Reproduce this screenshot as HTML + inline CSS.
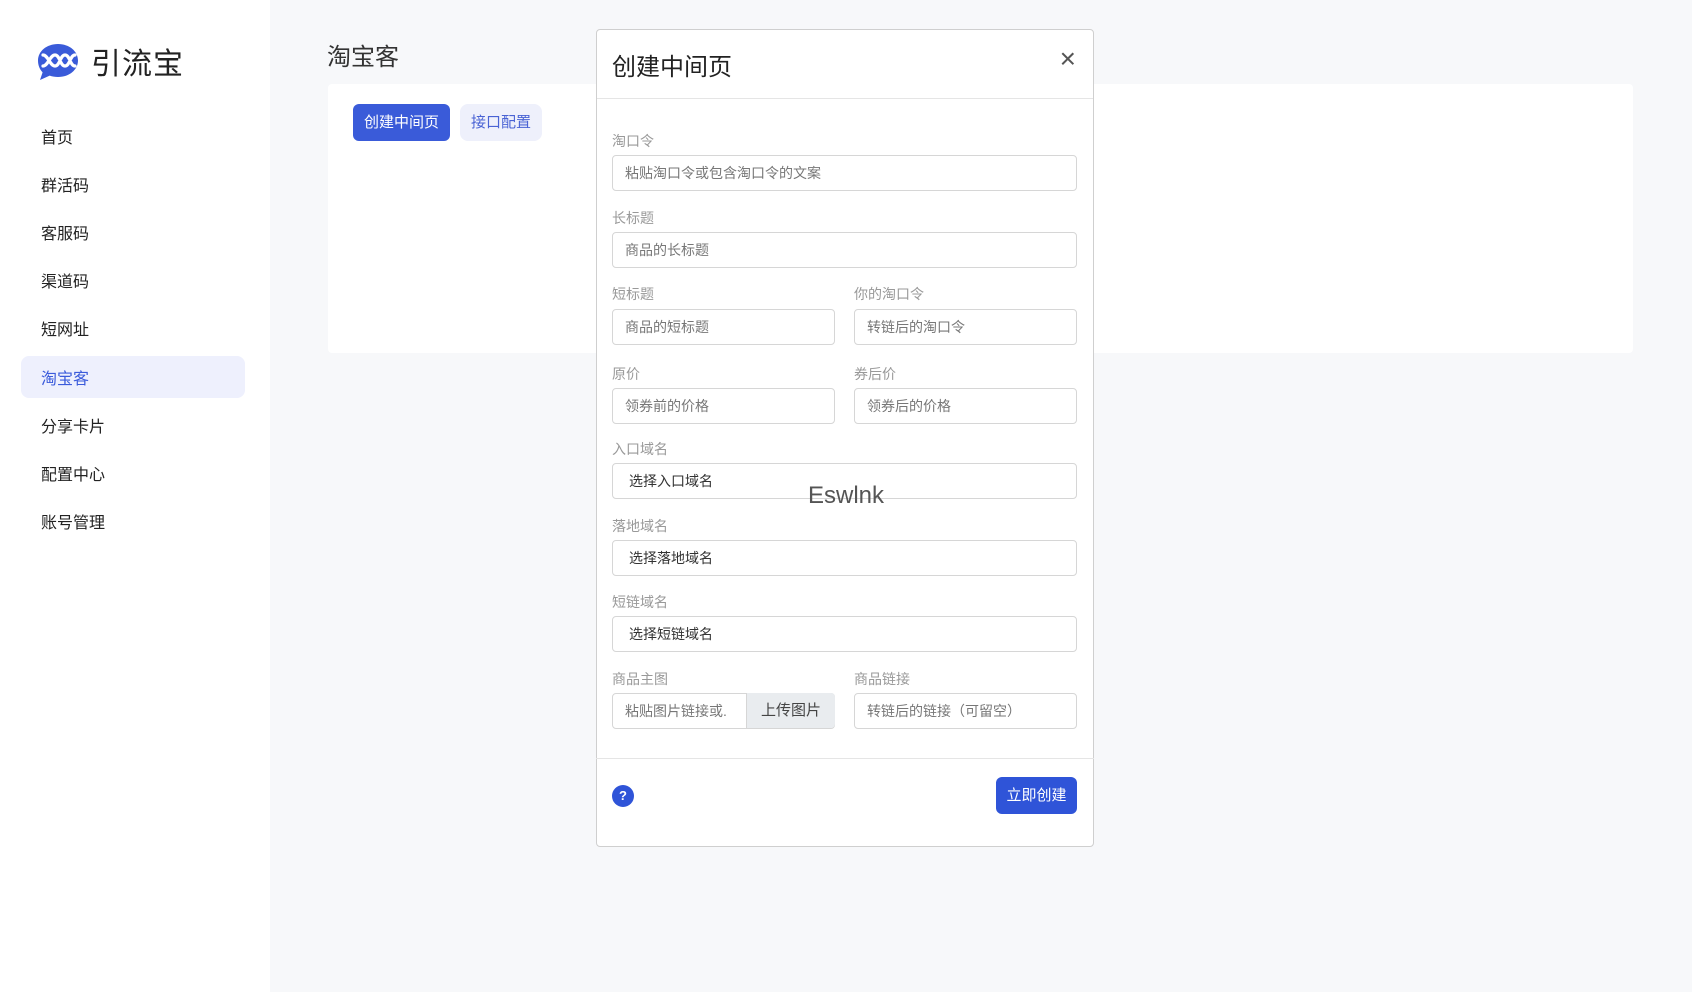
<!DOCTYPE html>
<html><head><meta charset="utf-8"><style>
*{box-sizing:border-box;margin:0;padding:0}
body{width:1692px;height:992px;overflow:hidden;background:#f7f8fa;font-family:"Liberation Sans","Noto Sans CJK SC",sans-serif;position:relative}
.side{position:absolute;left:0;top:0;width:270px;height:992px;background:#fff}
.logo{position:absolute;left:36px;top:42px}
.brand{position:absolute;left:91px;top:39px;font-size:30px;color:#222;letter-spacing:1px}
.nav{position:absolute;left:41px;font-size:16px;color:#222}
.act{position:absolute;left:21px;top:356px;width:224px;height:42px;background:#eef0fd;border-radius:8px}
.title{position:absolute;left:327px;top:37px;font-size:24px;color:#333}
.card{position:absolute;left:328px;top:84px;width:1305px;height:269px;background:#fff;border-radius:4px}
.btn1{position:absolute;left:353px;top:104px;width:97px;height:37px;background:#3a5bd9;color:#fff;border-radius:6px;font-size:15px;text-align:center;line-height:37px}
.btn2{position:absolute;left:460px;top:104px;width:82px;height:37px;background:#eef0fb;color:#4a63d4;border-radius:8px;font-size:15px;text-align:center;line-height:37px}
.modal{position:absolute;left:596px;top:29px;width:498px;height:818px;background:#fff;border:1px solid #cfcfcf;border-radius:4px}
.mh{position:absolute;left:0;top:0;width:100%;height:69px;border-bottom:1px solid #e5e5e5}
.mt{position:absolute;left:15px;top:17px;font-size:24px;color:#222}
.x{position:absolute;right:17px;top:13px;font-size:28px;color:#555}
.lb{position:absolute;font-size:14px;color:#999}
.in{position:absolute;height:36px;border:1px solid #d6d6d6;border-radius:4px;font-size:14px;color:#777;line-height:34px;padding-left:12px;background:#fff}
.sel{color:#333;padding-left:16px}
.up{position:absolute;left:746px;top:693px;width:89px;height:35px;background:#e9ecef;border-left:1px solid #d6d6d6;font-size:15px;color:#444;text-align:center;line-height:35px;border-radius:0 4px 4px 0}
.mf{position:absolute;left:596px;top:758px;width:498px;border-top:1px solid #e5e5e5}
.q{position:absolute;left:612px;top:785px;width:22px;height:22px;border-radius:50%;background:#2f54d8;color:#fff;font-size:13px;font-weight:bold;text-align:center;line-height:22px}
.go{position:absolute;left:996px;top:777px;width:81px;height:37px;background:#2f54d8;border-radius:6px;color:#fff;font-size:15px;text-align:center;line-height:37px}
.wm{position:absolute;left:808px;top:482px;font-size:24px;color:#555}
</style></head><body>
<div class="side">
<svg class="logo" width="44" height="40" viewBox="0 0 44 40"><path d="M22 2C33.6 2 42 9.5 42 18.5S33.6 35 22 35c-3 0-5.8-.5-8.3-1.4L4 38l2.6-7.6C3.6 27.3 2 23.1 2 18.5 2 9.5 10.4 2 22 2z" fill="#3a5bd9"/><path d="M7 13c5 0 7 11 12 11s5-11 10-11 5 11 10 11M7 24c5 0 7-11 12-11s5 11 10 11 5-11 10-11" stroke="#fff" stroke-width="3.2" fill="none" stroke-linecap="round"/></svg>
<div class="brand">引流宝</div>
<div class="act"></div>
<div class="nav" style="top:124px">首页</div>
<div class="nav" style="top:172px">群活码</div>
<div class="nav" style="top:220px">客服码</div>
<div class="nav" style="top:268px">渠道码</div>
<div class="nav" style="top:316px">短网址</div>
<div class="nav" style="top:365px;color:#3b5bdb">淘宝客</div>
<div class="nav" style="top:413px">分享卡片</div>
<div class="nav" style="top:461px">配置中心</div>
<div class="nav" style="top:509px">账号管理</div>
</div>
<div class="title">淘宝客</div>
<div class="card"></div>
<div class="btn1">创建中间页</div>
<div class="btn2">接口配置</div>
<div class="modal"><div class="mh"><div class="mt">创建中间页</div><div class="x">×</div></div></div>
<div class="lb" style="left:612px;top:131px">淘口令</div>
<div class="in" style="left:612px;top:155px;width:465px">粘贴淘口令或包含淘口令的文案</div>
<div class="lb" style="left:612px;top:208px">长标题</div>
<div class="in" style="left:612px;top:232px;width:465px">商品的长标题</div>
<div class="lb" style="left:612px;top:284px">短标题</div>
<div class="in" style="left:612px;top:309px;width:223px">商品的短标题</div>
<div class="lb" style="left:854px;top:284px">你的淘口令</div>
<div class="in" style="left:854px;top:309px;width:223px">转链后的淘口令</div>
<div class="lb" style="left:612px;top:364px">原价</div>
<div class="in" style="left:612px;top:388px;width:223px">领券前的价格</div>
<div class="lb" style="left:854px;top:364px">券后价</div>
<div class="in" style="left:854px;top:388px;width:223px">领券后的价格</div>
<div class="lb" style="left:612px;top:439px">入口域名</div>
<div class="in sel" style="left:612px;top:463px;width:465px">选择入口域名</div>
<div class="lb" style="left:612px;top:516px">落地域名</div>
<div class="in sel" style="left:612px;top:540px;width:465px">选择落地域名</div>
<div class="lb" style="left:612px;top:592px">短链域名</div>
<div class="in sel" style="left:612px;top:616px;width:465px">选择短链域名</div>
<div class="lb" style="left:612px;top:669px">商品主图</div>
<div class="in" style="left:612px;top:693px;width:223px">粘贴图片链接或.</div>
<div class="up">上传图片</div>
<div class="lb" style="left:854px;top:669px">商品链接</div>
<div class="in" style="left:854px;top:693px;width:223px">转链后的链接（可留空）</div>
<div class="wm">Eswlnk</div>
<div class="mf"></div>
<div class="q">?</div>
<div class="go">立即创建</div>
</body></html>
